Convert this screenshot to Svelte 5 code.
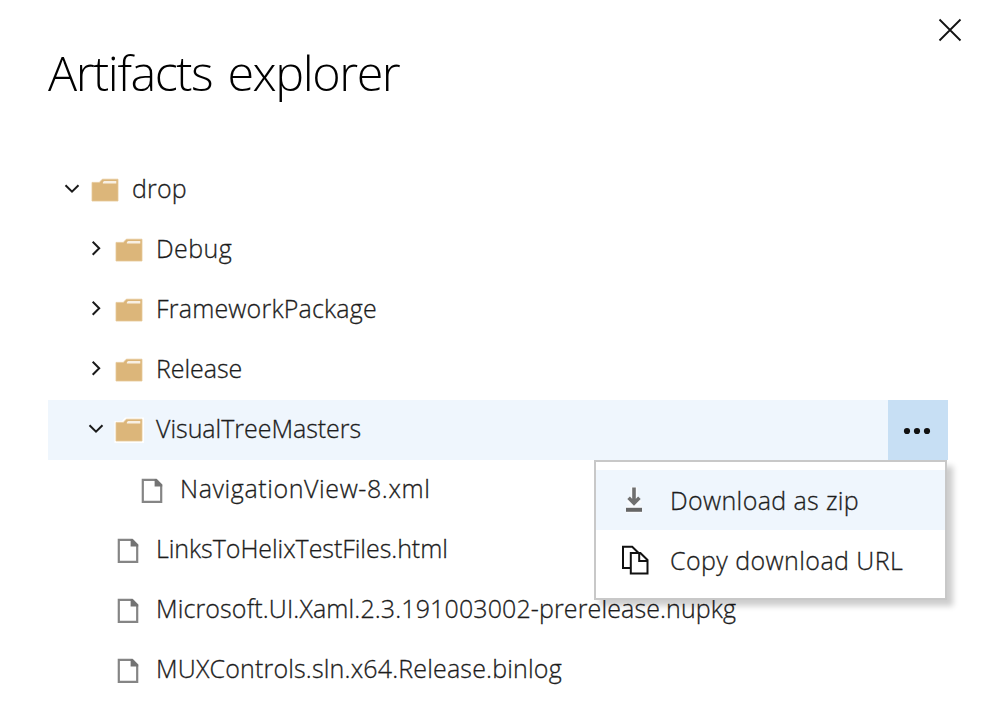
<script>
  const rows = [
    { name: 'drop', level: 0, kind: 'folder', open: true, spacing: 0.15 },
    { name: 'Debug', level: 1, kind: 'folder', open: false, spacing: 0.45 },
    { name: 'FrameworkPackage', level: 1, kind: 'folder', open: false, spacing: 0.2 },
    { name: 'Release', level: 1, kind: 'folder', open: false, spacing: -0.05 },
    { name: 'VisualTreeMasters', level: 1, kind: 'folder', open: true, selected: true, spacing: -0.03 },
    { name: 'NavigationView-8.xml', level: 2, kind: 'file', spacing: 0.6 },
    { name: 'LinksToHelixTestFiles.html', level: 1, kind: 'file', spacing: -0.05 },
    { name: 'Microsoft.UI.Xaml.2.3.191003002-prerelease.nupkg', level: 1, kind: 'file', spacing: 0.12 },
    { name: 'MUXControls.sln.x64.Release.binlog', level: 1, kind: 'file', spacing: 0.17 }
  ];
</script>

<main class="panel">
  <button class="close" aria-label="Close">
    <svg width="24" height="24" viewBox="0 0 24 24"><path d="M1.5 1.5 22.5 22.5M22.5 1.5 1.5 22.5" /></svg>
  </button>
  <h1><span>Artifacts explorer</span></h1>

  <div class="tree" role="tree">
    {#each rows as row}
      <div class="row" class:selected={row.selected} role="treeitem" aria-selected={!!row.selected} style:padding-left="{12 + row.level * 24}px">
        <span class="chevron">
          {#if row.kind === 'folder'}
            <svg width="24" height="24" viewBox="0 0 24 24">
              {#if row.open}
                <path d="M5.5 9.2 12 15.7 18.5 9.2" />
              {:else}
                <path d="M8.7 5.7 15.2 12.2 8.7 18.7" />
              {/if}
            </svg>
          {/if}
        </span>
        <span class="icon">
          {#if row.kind === 'folder'}
            <svg width="30" height="26" viewBox="0 0 30 26">
              <path class="halo" d="M0.5 4H8L11 0.5H30V26H0.5Z" />
              <path class="folder" d="M2 5.4H9.3L12.3 2.2H28V24H2Z" />
              <path class="tab" d="M14.2 4H26.3V6.4H12.8Q12.4 5 14.2 4Z" />
            </svg>
          {:else}
            <svg class="file" width="30" height="26" viewBox="0 0 30 26">
              <path d="M4.8 2.8H18.1L23.2 7.9V24.9H4.8Z" />
              <path class="fold" d="M16.6 2H18.5L24.2 7.8V9.6H16.6Z" />
            </svg>
          {/if}
        </span>
        <span class="name" style:letter-spacing="{row.spacing}px">{row.name}</span>
        {#if row.selected}
          <button class="more" aria-label="More actions">
            <svg width="28" height="8" viewBox="0 0 28 8"><circle cx="4" cy="4" r="3.1" /><circle cx="14" cy="4" r="3.1" /><circle cx="24" cy="4" r="3.1" /></svg>
          </button>
        {/if}
      </div>
    {/each}
  </div>

  <div class="menu" role="menu">
    <div class="item active" role="menuitem">
      <svg width="30" height="30" viewBox="0 0 30 30">
        <path class="glow" d="M14 2V19M8.5 14.5 14 20 19.5 14.5M6 24.8H22" />
        <path class="down" d="M14 2.5V18M8.6 12.8 14 18.2 19.4 12.8" />
        <path class="base" d="M6 24.8H22" />
      </svg>
      <span class="zip">Download as zip</span>
    </div>
    <div class="item" role="menuitem">
      <svg width="30" height="30" viewBox="0 0 30 30">
        <path class="copy" d="M10.5 23H3V1.8H12.2L18.6 8M10.8 8H20.4L27.5 15V28.6H10.8ZM19.2 8V16H27.5" />
      </svg>
      <span class="url">Copy download URL</span>
    </div>
  </div>
</main>

<style>
  :global(body) { background: #fff; overflow: hidden; }
  .panel {
    position: relative;
    box-sizing: border-box;
    width: 992px;
    height: 711px;
    padding: 40px 44px 0 48px;
    background: #fff;
    color: #1c1c1c;
    font: 300 25px/60px 'Open Sans', 'Noto Sans', sans-serif;
    overflow: hidden;
  }
  button { border: 0; padding: 0; background: none; }
  svg { display: block; flex: none; }
  .close { position: absolute; left: 938px; top: 18px; }
  .close path { fill: none; stroke: #111; stroke-width: 1.8; }
  h1 { margin: 0; height: 120px; font-size: 48.5px; font-weight: 300; line-height: 65px; letter-spacing: -1.45px; word-spacing: 4px; color: #000; white-space: nowrap; }
  .row {
    box-sizing: border-box;
    width: 900px;
    height: 60px;
    display: flex;
    align-items: center;
    white-space: nowrap;
  }
  .selected { background: #eff6fd; }
  .chevron { width: 24px; height: 24px; margin-right: 6px; margin-bottom: 4px; }
  .chevron path { fill: none; stroke: #1a1a1a; stroke-width: 2; }
  .icon { width: 30px; height: 26px; margin-right: 12px; }
  .halo { fill: #fff; }
  .folder { fill: #dcb67a; stroke: #e6c897; stroke-width: 0.8; }
  .tab { fill: #f8f0e3; }
  .file path { fill: #fff; stroke: #858585; stroke-width: 2.2; }
  .file .fold { fill: #747474; stroke: none; }
  .name { padding-bottom: 3px; line-height: 57px; }
  .name, .zip, .url { -webkit-text-stroke: 0.3px #1c1c1c; }
  .zip { letter-spacing: 0.37px; }
  .url { letter-spacing: 0.43px; }
  .more {
    width: 60px;
    height: 60px;
    margin-left: auto;
    background: #c7dff4;
    display: flex;
    align-items: center;
    justify-content: center;
  }
  .more svg { fill: #111; margin: 2px 2px 0 0; }
  .menu {
    position: absolute;
    left: 594px;
    top: 460px;
    box-sizing: border-box;
    width: 353px;
    height: 140px;
    padding-top: 8px;
    border: 2px solid #c8c8c8;
    background: #fff;
    box-shadow: 6px 6px 6px rgba(0, 0, 0, 0.2);
  }
  .item { display: flex; align-items: center; height: 60px; padding-left: 24px; gap: 20px; white-space: nowrap; }
  .active { background: #eff6fd; }
  .glow { fill: none; stroke: #fff; stroke-width: 7; opacity: 0.6; }
  .down { fill: none; stroke: #707070; stroke-width: 3.6; }
  .base { stroke: #666; stroke-width: 4; }
  .copy { fill: none; stroke: #111; stroke-width: 2; }
</style>
